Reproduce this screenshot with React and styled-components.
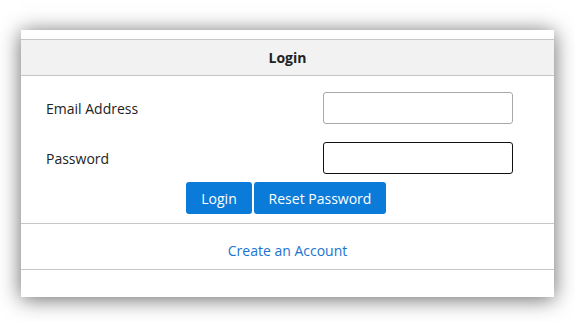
import React from "react";
import styled, { createGlobalStyle } from "styled-components";

const Global = createGlobalStyle`
  html, body { margin: 0; padding: 0; background: #ffffff; }
  body { font-family: "Open Sans", "Noto Sans", sans-serif; color: #222; }
  * { box-sizing: border-box; }
`;

const Page = styled.div`
  padding: 30px 21px 25px 21px;
`;

const Card = styled.div`
  width: 533px;
  height: 267px;
  background: #fff;
  box-shadow: 0 2px 20px rgba(0, 0, 0, 0.6);
  padding-top: 9px;
  display: flex;
  flex-direction: column;
`;

const Header = styled.div`
  height: 37px;
  background: #f2f2f2;
  border-top: 1px solid #c6c6c6;
  border-bottom: 1px solid #c6c6c6;
  display: flex;
  align-items: center;
  justify-content: center;
  font-size: 14px;
  font-weight: 700;
  color: #222;
`;

const Form = styled.div`
  display: grid;
  grid-template-columns: 277px 190px;
  row-gap: 18px;
  padding: 16px 0 0 25px;
  align-items: center;
`;

const Label = styled.label`
  font-size: 14px;
  color: #222;
`;

const Input = styled.input`
  width: 190px;
  height: 32px;
  border: 1px solid ${(p) => (p.$focused ? "#111" : "#a8a8a8")};
  border-radius: 3px;
  background: #fff;
  outline: none;
  font-family: inherit;
  font-size: 14px;
  padding: 0 8px;
`;

const Actions = styled.div`
  display: flex;
  justify-content: center;
  gap: 2px;
  padding: 8px 0 0 0;
  margin-left: -3px;
`;

const Button = styled.button`
  height: 32px;
  width: ${(p) => p.$w}px;
  border: none;
  border-radius: 3px;
  background: #0a7bd8;
  color: #fff;
  font-family: inherit;
  font-size: 14px;
  padding: 0;
  cursor: pointer;
`;

const Footer = styled.div`
  margin-top: 9px;
  height: 47px;
  border-top: 1px solid #c6c6c6;
  border-bottom: 1px solid #c6c6c6;
  display: flex;
  align-items: center;
  justify-content: center;
  padding-top: 7px;
`;

const Link = styled.a`
  font-size: 14px;
  color: #1a73d0;
  text-decoration: none;
`;

export default function App() {
  return (
    <>
      <Global />
      <Page>
        <Card>
          <Header>Login</Header>
          <Form>
            <Label>Email Address</Label>
            <Input type="text" />
            <Label>Password</Label>
            <Input type="password" $focused />
          </Form>
          <Actions>
            <Button $w={66}>Login</Button>
            <Button $w={132}>Reset Password</Button>
          </Actions>
          <Footer>
            <Link href="#">Create an Account</Link>
          </Footer>
        </Card>
      </Page>
    </>
  );
}
